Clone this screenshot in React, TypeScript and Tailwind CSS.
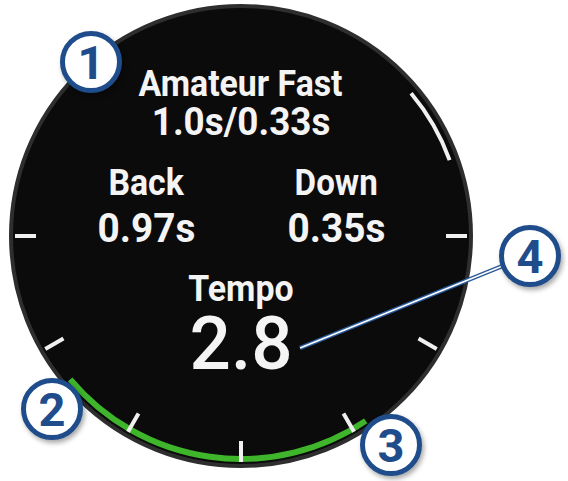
import React from "react";

const CX = 241;
const CY = 236;

function pt(deg: number, r: number) {
  const a = (deg * Math.PI) / 180;
  return [CX + r * Math.sin(a), CY - r * Math.cos(a)];
}

function arc(from: number, to: number, r: number) {
  const [x1, y1] = pt(from, r);
  const [x2, y2] = pt(to, r);
  return `M ${x1} ${y1} A ${r} ${r} 0 0 1 ${x2} ${y2}`;
}

const ticks = [90, 120, 150, 180, 210, 240, 270];

function Callout({ n, className }: { n: number; className: string }) {
  return (
    <div
      className={`absolute flex h-[62px] w-[62px] items-center justify-center rounded-full border-[5px] border-[#1f4d8c] bg-white text-[47px] font-bold leading-none text-[#1f4d8c] shadow-[2px_3px_5px_rgba(0,0,0,0.35)] ${className}`}
    >
      {n}
    </div>
  );
}

function Dial() {
  return (
    <svg className="pointer-events-none absolute inset-0" width={568} height={481} viewBox="0 0 568 481">
      <path d={arc(146, 230, 223)} fill="none" stroke="#3fb52b" strokeWidth={6} />
      <path d={arc(50, 70, 222)} fill="none" stroke="#f0f0f0" strokeWidth={4} />
      {ticks.map((t) => {
        const [x1, y1] = pt(t, 205);
        const [x2, y2] = pt(t, 226);
        return <line key={t} x1={x1} y1={y1} x2={x2} y2={y2} stroke="#f0f0f0" strokeWidth={4} />;
      })}
      {/* leader to callout 4 */}
      <line x1={300} y1={348} x2={505} y2={265} stroke="#2a5a9c" strokeWidth={4.5} />
      <line x1={300} y1={348} x2={505} y2={265} stroke="#ffffff" strokeWidth={1.5} />
    </svg>
  );
}

export default function App() {
  return (
    <div className="relative h-[481px] w-[568px] overflow-hidden bg-white pl-[9px] pt-[4px] font-[family-name:Roboto,sans-serif]">
      <div className="h-[464px] w-[464px] rounded-full border-[4px] border-[#2e2e2e] bg-[#0b0b0b] text-[#f4f4f4]">
        <div className="flex flex-col items-center pt-[61px]">
          <p className="scale-x-[0.94] text-[36px] font-bold leading-[0.85]">Amateur Fast</p>
          <p className="mt-[6px] scale-x-[0.97] text-[38px] font-bold leading-[0.85]">1.0s/0.33s</p>
          <div className="mt-[30px] flex gap-[40px]">
            <div className="flex w-[150px] flex-col items-center">
              <p className="scale-x-[0.94] text-[36px] font-bold leading-[0.85]">Back</p>
              <p className="mt-[14px] scale-x-[0.97] text-[40px] font-bold leading-[0.85]">0.97s</p>
            </div>
            <div className="flex w-[150px] flex-col items-center">
              <p className="scale-x-[0.92] text-[36px] font-bold leading-[0.85]">Down</p>
              <p className="mt-[14px] scale-x-[0.97] text-[40px] font-bold leading-[0.85]">0.35s</p>
            </div>
          </div>
          <p className="mt-[28px] scale-x-[0.94] text-[36px] font-bold leading-[0.85]">Tempo</p>
          <p className="mt-[7px] scale-x-[0.97] text-[75px] font-medium leading-[0.85]">2.8</p>
        </div>
      </div>

      <Dial />

      <Callout n={1} className="left-[60px] top-[31px]" />
      <Callout n={2} className="left-[21px] top-[378px]" />
      <Callout n={3} className="left-[360px] top-[414px]" />
      <Callout n={4} className="left-[499px] top-[225px]" />
    </div>
  );
}
